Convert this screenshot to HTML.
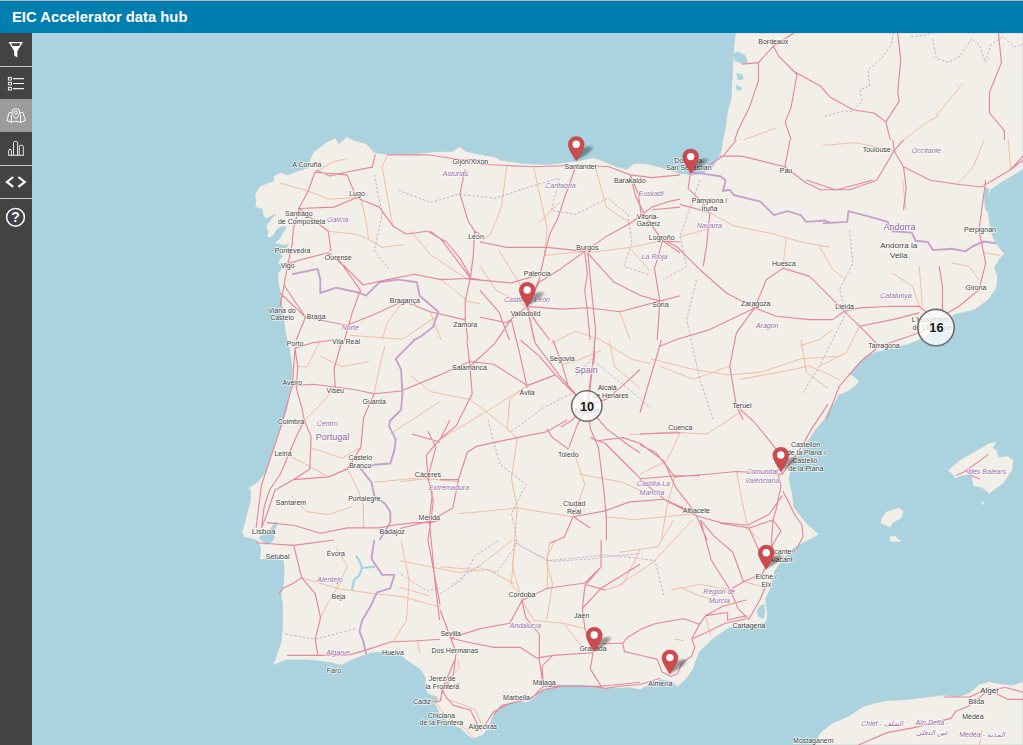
<!DOCTYPE html>
<html><head><meta charset="utf-8">
<style>
html,body{margin:0;padding:0;width:1023px;height:745px;overflow:hidden;background:#aad3df;font-family:"Liberation Sans",sans-serif;}
#hdr{position:absolute;left:0;top:0;width:1023px;height:33px;background:#017eb0;border-top:1px solid #abbfcb;box-shadow:inset 0 1px 0 #0a6c9c;box-sizing:border-box;}
#hdr span{position:absolute;left:12px;top:7.5px;color:#fff;font-weight:bold;font-size:14.8px;line-height:17px;}
#side{position:absolute;left:0;top:33px;width:32px;height:712px;background:#3c3b3b;}
.btn{position:absolute;left:0;width:32px;height:33px;}
.sep{position:absolute;left:0;width:32px;height:1px;background:#bdbdbd;}
#map{position:absolute;left:0;top:0;}
#labels text{font-family:"Liberation Sans",sans-serif;text-anchor:middle;paint-order:stroke;stroke:rgba(255,255,255,0.75);stroke-width:1.6px;stroke-linejoin:round;}
#labels .c{font-size:7px;fill:#3d3d3d;}
#labels .c8{font-size:8px;fill:#3f3f3f;}
#labels .r{font-size:7px;fill:#9a6aa5;font-style:italic;}
#labels .n{font-size:9px;fill:#8f5c9f;}
</style></head><body>
<svg id="map" width="1023" height="745" viewBox="0 0 1023 745">
<defs><filter id="blur" x="-50%" y="-50%" width="200%" height="200%"><feGaussianBlur stdDeviation="2.3"/></filter>
<symbol id="pin" viewBox="0 0 16.5 24.5" overflow="visible"><path d="M8.25,0.3 C3.8,0.3 0.3,3.9 0.3,8.2 C0.3,13.5 8.25,24.4 8.25,24.4 C8.25,24.4 16.2,13.5 16.2,8.2 C16.2,3.9 12.7,0.3 8.25,0.3 Z" fill="#cc4b4f" stroke="#b23e42" stroke-width="0.5"/><circle cx="8.2" cy="8" r="3.7" fill="#fff"/></symbol></defs>
<rect x="0" y="0" width="1023" height="745" fill="#aad3df"/>
<!--LAND-->
<g fill="#f2efe9" stroke="#b5cfd6" stroke-width="0.7" stroke-linejoin="round">
<polygon points="735.3,33.0 1023.0,33.0 1023.0,169.6 1011.4,176.5 1000.0,183.3 990.9,190.1 987.4,201.5 988.6,215.2 990.9,231.2 995.4,242.6 1004.5,254.0 1000.0,258.5 994.3,267.6 997.7,276.8 996.6,288.1 988.6,299.5 974.9,309.8 955.0,314.5 941.0,324.6 924.0,338.0 907.6,344.7 883.0,350.7 874.4,352.9 865.8,356.1 860.5,361.5 853.0,370.0 849.7,374.4 853.0,375.4 859.4,381.3 855.1,386.2 850.8,389.4 843.3,393.7 839.0,394.8 835.8,401.2 829.3,409.8 824.0,420.0 814.0,432.0 806.0,444.5 798.4,456.6 791.0,467.0 789.3,479.7 792.5,494.2 794.0,507.5 807.4,524.3 819.1,534.4 807.4,541.0 794.0,547.8 784.0,557.9 774.9,570.9 772.2,583.0 769.5,591.0 765.5,599.1 766.5,606.0 767.5,614.0 766.8,620.5 764.2,623.2 753.4,624.6 740.0,626.0 729.9,627.5 713.5,638.4 699.5,651.6 693.2,668.8 687.0,678.2 677.6,686.8 671.3,681.3 661.9,679.8 652.6,682.9 640.0,689.9 629.1,687.6 605.6,689.1 582.1,685.0 554.7,685.0 543.9,689.7 534.5,697.5 528.2,702.2 512.6,702.2 500.1,706.9 493.8,714.7 487.6,728.8 482.9,735.1 473.5,739.0 468.8,736.6 461.0,728.8 453.2,725.7 445.4,719.4 439.5,713.6 437.5,708.9 435.5,705.6 432.8,702.9 432.1,700.9 434.2,702.2 438.2,701.5 436.8,696.8 431.5,695.5 427.4,693.5 424.8,686.8 425.4,678.0 420.7,670.0 415.6,666.3 406.3,660.0 401.5,655.8 387.8,651.7 371.4,653.0 355.0,658.5 341.3,665.4 330.3,662.6 308.4,659.9 286.5,659.9 272.8,665.4 275.6,658.5 281.0,642.1 282.4,628.4 282.4,603.8 280.9,594.0 283.5,583.9 284.1,572.4 283.5,560.9 278.4,558.4 268.2,559.0 259.2,559.6 260.5,553.3 260.5,546.9 257.3,540.5 251.6,538.6 243.9,537.3 242.0,531.6 243.9,525.2 246.5,515.0 250.5,500.0 250.5,489.9 248.0,488.3 250.5,486.7 257.7,481.9 264.2,473.8 267.4,465.8 272.2,452.1 275.4,440.0 280.0,430.0 286.8,408.9 290.9,387.4 292.2,368.6 289.5,349.8 285.5,333.7 281.5,301.5 278.8,285.0 277.8,280.0 277.8,273.3 281.4,268.5 286.2,266.1 288.6,261.2 281.4,264.9 277.8,263.6 280.2,258.8 282.6,256.4 279.0,252.8 280.2,248.0 286.2,248.0 288.6,244.3 283.8,245.5 276.6,243.7 272.9,241.9 275.4,241.9 280.2,238.3 281.4,234.7 285.0,229.8 286.2,226.2 280.2,227.4 276.6,229.8 274.1,234.7 269.3,238.3 266.9,235.9 268.1,231.0 265.7,226.2 269.3,221.4 275.4,214.1 271.7,216.0 265.7,219.0 263.3,215.4 262.1,209.3 254.8,206.9 256.0,200.9 254.8,194.8 259.4,186.4 264.1,184.5 273.5,180.8 273.5,176.1 281.0,172.3 287.6,175.1 294.2,172.3 302.6,169.5 308.3,167.6 310.2,159.1 313.5,152.0 319.6,147.6 327.4,141.7 335.2,137.8 339.1,143.7 346.9,136.8 352.8,139.8 358.7,141.7 366.5,143.7 374.3,152.5 388.0,154.4 417.3,153.5 436.9,151.5 452.5,151.5 459.3,146.6 466.2,151.5 485.7,155.4 496.0,157.2 500.0,160.0 523.5,163.5 547.0,164.6 565.7,162.3 577.4,161.1 593.8,157.6 603.2,161.1 617.3,167.0 626.7,169.3 633.7,163.5 645.5,163.5 659.5,167.0 678.3,172.8 692.4,175.2 704.1,172.8 713.5,165.8 720.5,154.1 722.9,140.0 725.1,129.3 728.0,108.8 731.0,100.0 732.0,80.3 733.7,50.0"/>
<polygon points="947.5,470.8 959.2,460.4 975.4,451.1 989.3,443.0 997.5,441.3 992.8,447.6 997.5,451.1 998.6,456.9 1007.9,455.7 1013.7,460.4 1012.6,469.7 1003.3,483.6 989.3,494.0 982.4,488.2 973.1,486.0 970.8,474.3 959.2,476.6 955.7,479.0 952.2,474.3"/>
<polygon points="881.4,518.4 886.0,511.5 898.8,507.3 903.9,511.5 901.1,518.4 893.0,523.0 890.6,527.7 884.8,525.4 880.2,523.0"/>
<polygon points="889.5,536.0 896.0,535.5 898.0,539.0 902.3,540.0 900.0,542.1 889.5,542.0"/>
<polygon points="813.3,745.0 820.4,732.6 832.3,723.1 848.9,716.0 863.1,706.5 875.0,703.0 886.9,700.6 908.3,699.4 927.3,697.0 943.9,695.1 958.1,697.0 970.0,692.3 979.5,684.0 989.0,681.6 1000.9,684.0 1012.8,685.1 1023.0,681.6 1023.0,745.0"/>
<polygon points="981.0,502.0 984.0,501.5 984.5,504.5 981.5,505.0"/>
</g>
<!--/LAND-->
<!--BORDERS-->
<!--ROADS-->
<path d="M733.3,53.7 L737.8,51.4 L745.2,55.2 L748.1,62.6 L742.2,64.1 L734.8,61.1 ZM736.3,73.0 L742.2,74.5 L743.7,78.9 L737.8,80.4 ZM736.3,84.8 L742.2,87.8 L740.7,90.8 L736.3,89.9 ZM761.0,605.0 L764.5,604.0 L765.0,612.0 L764.0,619.0 L758.5,617.0 L757.0,610.0 ZM985.5,187.0 L989.0,189.0 L988.5,203.0 L987.5,213.0 L985.0,209.0 L984.0,196.0 ZM258.0,538.0 L264.0,534.0 L269.0,531.0 L273.0,525.0 L277.0,521.0 L276.5,527.0 L273.0,533.0 L275.0,537.0 L272.0,542.0 L266.0,545.0 L262.0,541.0 Z" fill="#aad3df"/>
<path d="M356.4,556.1 L360.0,562.0 L362.0,568.0 L359.3,575.4M362.0,568.0 L374.6,566.6M359.3,575.4 L354.0,580.0 L352.0,590.0" fill="none" stroke="#aad3df" stroke-width="2.2" stroke-linejoin="round" stroke-linecap="round"/>
<path d="M360.5,197.7 L365.9,220.5 L368.6,239.3 L382.0,247.4 L403.5,244.7M280.0,183.0 L308.2,191.0 L328.3,199.1 L356.5,197.7M314.9,172.2 L333.7,161.5 L347.1,158.8M392.8,225.9 L382.0,166.8 L387.4,154.8M328.3,231.3 L355.2,234.0 L368.6,239.3M403.5,301.1 L387.4,322.6 L382.0,340.0M430.3,311.8 L441.1,340.0M441.1,279.6 L454.5,290.3 L467.9,301.1 L480.0,303.8M506.8,165.5 L501.5,207.1 L490.7,234.0 L480.0,242.0M533.7,166.8 L547.1,228.6 L544.4,255.4M595.4,166.8 L606.2,207.1 L630.3,223.2M480.0,266.2 L496.1,290.3 L527.0,306.4M587.4,252.8 L630.3,247.4 L662.6,240.7M527.0,306.4 L533.7,340.0M619.6,311.8 L630.3,340.0M544.4,255.4 L584.7,251.4M709.5,212.5 L733.7,225.9 L774.0,234.0 L800.8,242.0 L830.3,247.4M680.0,236.6 L709.5,228.6M984.1,252.8 L1000.2,255.4M823.0,145.4 L855.2,142.7 L894.1,150.7M957.2,184.3 L973.3,166.8 L984.1,140.0M1008.2,140.0 L1010.9,169.5M936.2,115.9 L962.9,83.4M903.6,139.9 L927.3,121.9 L939.2,115.9M743.7,139.9 L776.3,127.8M304.4,420.5 L320.5,404.4 L335.3,387.0M320.5,340.0 L307.1,366.8 L297.7,366.8M374.2,393.7 L379.6,366.8 L385.0,345.4M288.3,455.4 L304.4,463.5 L328.6,476.9M360.8,447.4 L342.0,458.1 L325.9,452.8 L309.8,447.4M347.4,468.9 L358.1,490.3 L363.5,506.4 L363.5,527.9M374.2,482.3 L401.1,479.6 L427.9,476.9M390.3,434.0 L440.0,401.7M291.0,495.7 L307.1,511.8 L328.6,514.5 L352.8,506.4M320.5,356.1 L342.0,366.8 L368.9,361.5M527.2,385.6 L509.8,399.1 L507.1,428.6 L517.9,439.3M440.0,439.3 L493.7,407.1 L527.2,385.6M609.1,340.0 L614.5,366.8 L640.0,388.3M579.6,474.2 L622.6,482.3 L640.0,490.3M601.1,350.7 L574.2,361.5 L563.5,364.2M650.7,358.8 L693.7,369.5 L728.6,374.9 L760.8,372.2 L801.1,358.8 L840.0,356.1M680.3,432.6 L707.1,434.0 L742.0,411.1M680.3,432.6 L666.8,460.8 L640.0,474.2M742.0,525.2 L760.8,540.0M674.9,476.9 L666.8,506.4 L661.5,540.0M736.6,471.5 L742.0,501.1 L747.4,525.2M801.1,340.0 L806.4,372.2 L827.9,388.3M301.7,577.6 L336.6,588.3 L374.2,593.7 L401.1,596.4 L440.0,607.1M336.6,588.3 L347.4,566.8 L336.6,548.1M401.1,540.0 L409.1,580.3 L406.4,620.5 L393.0,642.0M336.6,588.3 L325.9,607.1 L320.5,617.9M417.2,640.7 L419.9,652.8M440.0,566.8 L474.9,569.5 L512.5,540.0M521.9,600.4 L512.5,566.8 L515.2,540.0M547.4,588.3 L547.4,556.1 L555.4,540.0M445.4,698.4 L474.9,709.1 L483.0,727.9M563.5,623.2 L585.0,628.6M521.9,600.4 L534.0,620.5 L563.5,623.2 L582.3,647.4M620.0,584.4 L652.2,563.0 L692.5,520.0M620.0,552.2 L657.6,546.8 L673.7,520.0M671.0,589.8 L700.5,584.4 L730.1,589.8M716.6,600.5 L697.9,595.2 L679.1,587.1M743.5,581.7 L765.0,587.1 L770.3,581.7M981.9,730.3 L979.5,745.0M431.3,696.0 L446.9,717.9 L465.7,728.8 L473.5,738.2M457.9,660.0 L459.4,667.8 L453.2,674.1M674.5,639.1 L683.8,640.7M705.7,615.6 L710.4,636.0M410.4,230.5 L430.5,254.7 L466.8,278.9M350.0,335.3 L402.4,339.3 L438.6,315.1M499.0,250.7 L519.2,282.9 L527.2,307.1M539.3,222.5 L559.4,202.4M631.9,250.7 L650.0,270.8M551.4,343.3 L575.5,331.2 L599.7,339.3 L631.9,359.4 L650.0,363.5M410.4,375.5 L430.5,391.6 L470.8,399.7 L511.1,431.9M400.0,481.6 L426.4,478.7 L458.7,481.6M458.7,513.8 L517.3,508.0 L573.0,516.8M517.3,508.0 L511.4,478.7 L517.3,437.6M517.3,508.0 L514.4,543.2 L511.4,584.2 L523.2,598.9M400.0,560.8 L429.3,566.6 L458.7,572.5 L488.0,569.6 L514.4,584.2M549.6,543.2 L546.6,560.8 L552.5,584.2 L546.6,620.0M573.0,449.3 L584.8,484.5 L573.0,516.8M605.3,516.8 L634.6,519.7 L693.3,513.8M640.5,549.0 L622.9,584.2 L605.3,590.1M400.0,587.2 L429.3,596.0M628.7,434.7 L678.6,431.7M786.3,236.5 L783.0,268.1M739.8,379.4 L776.3,372.8 L809.6,366.1 L839.5,379.4M799.6,346.2 L819.5,339.5 L832.8,329.6M859.4,326.2 L846.1,352.8 L819.5,366.1M892.6,273.1 L912.6,286.3 L919.2,306.3M919.2,266.4 L922.5,306.3M819.5,246.5 L832.8,269.7 L846.1,279.7M952.5,263.1 L969.1,266.4 L979.0,279.7M660.0,366.1 L693.2,379.4 L729.8,366.1M902.6,180.0 L905.9,209.9" fill="none" stroke="#f4bda0" stroke-width="1" stroke-linejoin="round"/>
<path d="M285.6,634.0 L315.2,639.3 L355.4,628.6M401.1,574.9 L427.9,591.0 L440.0,588.3M440.0,593.7 L461.5,580.3 L474.9,556.1 L499.1,540.0M515.2,542.7 L528.6,550.7 L552.8,561.5 L590.3,558.8 L614.5,556.1 L640.0,553.4M398.3,190.3 L430.5,202.4 L458.7,194.3 L495.0,198.3 L531.2,186.2 L559.4,178.2M559.4,178.2 L551.4,210.4 L575.5,214.4 L607.8,198.3 L627.9,214.4M374.2,174.2 L382.2,214.4 L374.2,250.7 L390.3,270.8M627.9,214.4 L631.9,242.6 L623.9,266.8 L650.0,274.8M575.5,375.5 L591.6,359.4 L611.8,375.5 L631.9,391.6 L650.0,407.8M511.1,431.9 L543.3,407.8 L575.5,391.6M488.0,420.0 L499.7,464.0 L526.1,484.5 L511.4,513.8 L517.3,543.2 L546.6,560.8 L576.0,557.8 L605.3,554.9 L634.6,557.8 L655.1,560.8 L663.9,596.0M452.8,584.2 L476.2,566.6 L496.8,572.5 L517.3,543.2M699.9,180.0 L679.9,236.5 L686.6,266.4 L663.3,279.7M849.4,229.9 L852.8,263.1 L839.5,289.7 L846.1,312.9 L832.8,339.5 L819.5,366.1 L802.9,392.7M696.6,279.7 L686.6,319.6 L699.9,379.4 L713.2,419.9M893.4,33.0 L891.4,44.7 L881.7,58.4 L868.0,70.1 L869.9,85.8 L860.1,89.7 L862.1,101.4 L852.3,111.2 L842.6,111.2 L823.0,117.1M911.0,36.9 L924.7,35.0 L932.5,33.0M932.5,38.9 L936.4,58.4 L948.1,62.3 L959.9,56.5 L971.6,38.9 L979.4,44.7 L985.3,62.3 L991.1,44.7 L1002.9,36.9 L1014.6,46.7 L1023.0,44.7" fill="none" stroke="#c9a6cf" stroke-width="0.9" stroke-dasharray="2.5,1.8"/>
<path d="M292.1,274.2 L317.6,268.9 L320.3,279.6 L320.3,293.0 L336.4,287.7 L360.5,293.0 L365.9,295.7 L379.3,282.3 L398.1,279.6 L416.9,282.3 L419.6,295.7 L438.4,311.8 L433.0,327.1 L420.9,336.5 L412.9,340.3M690.7,172.8 L702.8,173.6 L720.3,176.2 L725.6,180.3 L723.0,191.0 L729.7,189.7 L733.7,195.0 L760.5,201.7 L765.9,207.1 L774.0,215.2 L787.4,211.1 L800.8,215.2 L806.2,221.9 L825.0,220.5 L830.3,223.2M823.0,223.2 L847.2,221.9 L848.5,211.1 L874.0,217.9 L887.4,221.9 L892.8,231.3 L911.6,232.6 L915.6,240.7 L927.7,242.0 L933.1,250.1 L951.9,248.7 L965.3,251.4 L973.3,246.0 L984.1,241.5 L996.2,243.4M414.5,340.0 L401.1,353.4 L395.7,358.8 L401.1,369.5 L402.4,393.7 L401.1,409.8 L390.3,420.5 L389.0,425.9 L395.7,439.3 L394.4,450.1 L390.3,463.5 L374.2,464.8 L360.8,468.9 L371.5,482.3 L374.2,495.7 L385.0,503.8 L390.3,511.8 L390.3,522.6 L379.6,540.0M374.2,540.0 L371.5,558.8 L382.3,574.9 L394.4,574.9 L390.3,588.3 L376.9,592.3 L371.5,604.4 L362.1,620.5 L359.5,631.3 L363.5,642.0 L366.2,654.1" fill="none" stroke="#c7a0cf" stroke-width="1.9" stroke-linejoin="round"/>
<path d="M314.9,172.2 L308.2,191.0 L298.8,208.5 L293.4,228.6 L292.1,244.7 L288.1,263.5 L284.0,285.0 L280.0,306.4M314.9,172.2 L347.1,174.9 L356.5,197.7 L379.3,207.1 L392.8,225.9 L406.2,234.0 L427.7,231.3 L446.4,242.0 L459.9,258.1 L470.6,276.9M387.4,154.8 L427.7,154.8 L454.5,158.8 L480.0,160.1M465.2,169.5 L459.9,193.7 L467.9,220.5 L474.6,231.3 L473.3,255.4 L470.6,276.9 L465.2,301.1 L465.2,319.9 L467.9,340.0M288.1,263.5 L306.8,258.1 L328.3,252.8 L344.4,266.2 L363.2,285.0 L387.4,279.6 L414.2,274.2 L441.1,279.6 L470.6,278.3M298.8,208.5 L328.3,231.3 L331.0,251.4M305.5,317.2 L347.1,325.2 L374.0,314.5 L403.5,301.1 L430.3,311.8 L465.2,319.9M337.7,258.1 L360.5,290.3 L352.5,311.8 L344.4,340.0M356.5,197.7 L333.7,207.1 L298.8,208.5M480.0,279.6 L470.6,278.3 L441.1,239.3 L430.3,231.3M474.6,231.3 L480.0,234.0M280.0,293.0 L305.5,317.2 L296.1,340.0M284.0,285.0 L305.5,317.2M480.0,164.2 L506.8,165.5 L533.7,166.8 L568.6,165.5 L587.4,165.5 L608.9,166.8 L630.3,174.9 L651.8,177.6 L680.0,174.9M480.0,242.0 L506.8,247.4 L547.1,247.4 L584.7,251.4M584.7,251.4 L606.2,236.6 L630.3,223.2 L641.1,215.2 L651.8,207.1 L667.9,201.7 L680.0,199.1M641.1,215.2 L638.4,193.7 L630.3,174.9M630.3,174.9 L635.7,196.4 L646.4,217.9 L662.6,240.7 L680.0,252.8M576.6,164.2 L565.9,193.7 L557.9,217.9 L549.8,234.0 L544.4,255.4 L539.1,279.6 L527.0,306.4M584.7,251.4 L560.5,268.9 L539.1,282.3 L527.0,306.4M584.7,251.4 L587.4,274.2 L584.7,290.3 L587.4,311.8 L590.1,340.0M527.0,306.4 L536.4,322.6 L549.8,340.0M527.0,306.4 L506.8,322.6 L480.0,317.2M527.0,306.4 L560.5,309.1 L587.4,307.8 L619.6,311.8 L659.9,301.1 L680.0,295.7M659.9,301.1 L654.5,268.9 L662.6,240.7M587.4,252.8 L614.2,282.3 L641.1,295.7 L659.9,301.1M651.8,209.8 L680.0,207.1M480.0,290.3 L498.8,311.8 L509.5,340.0M662.6,240.7 L680.0,242.0M659.9,301.1 L657.2,340.0M690.7,172.2 L706.8,166.8 L723.0,156.1 L736.4,140.0M690.7,172.2 L688.1,188.3 L701.5,201.7 L709.5,212.5M680.0,204.4 L709.5,212.5M720.3,156.1 L741.7,156.1 L784.7,166.8 L806.2,183.0 L822.3,190.5M784.7,166.8 L790.1,140.0M894.1,150.7 L903.5,166.8 L930.4,180.3 L957.2,184.3 L981.4,187.0 L1010.9,169.5 L1023.0,156.1M894.1,150.7 L876.7,180.3 L849.8,189.7 L823.0,189.7M894.1,150.7 L892.8,140.0M894.1,150.7 L903.5,140.0M903.5,166.8 L906.2,188.3 L903.5,209.8M1010.9,169.5 L1023.0,160.1M773.3,46.3 L779.2,56.7 L794.1,71.5 L820.7,86.3 L829.6,96.7 L853.3,110.0 L874.0,113.0 L885.9,121.9 L890.3,139.9M773.3,46.3 L758.5,62.6 L758.5,80.4 L749.6,107.1 L737.8,130.7 L734.8,139.9M773.3,46.3 L794.1,33.0M794.1,71.5 L797.0,74.5 L791.1,107.1 L785.2,121.9 L791.1,139.9M897.7,33.0 L900.7,59.7 L897.7,92.2 L899.2,101.1 L885.9,121.9M998.4,33.0 L1001.4,62.6 L989.5,92.2 L989.5,113.0 L1004.4,130.7 L1004.4,139.9M742.2,64.1 L758.5,62.6M295.0,348.1 L297.7,366.8 L296.4,388.3 L301.7,407.1 L304.4,420.5 L296.4,436.6 L288.3,455.4 L280.3,474.2 L269.5,490.3 L264.2,506.4 L261.5,527.9M295.0,348.1 L292.3,385.6 L280.3,428.6 L272.2,452.8 L261.5,485.0 L258.8,506.4 L256.1,527.9M295.0,348.1 L312.5,342.7 L334.0,340.0M292.3,385.6 L312.5,384.3 L335.3,387.0 L355.4,389.7 L374.2,393.7 L401.1,391.0 L440.0,374.9M335.3,387.0 L334.0,369.5 L342.0,340.0M374.2,393.7 L363.5,417.9 L360.8,447.4 L347.4,468.9 L328.6,476.9 L293.7,479.6 L274.9,490.3 L266.8,514.5 L261.5,527.9M393.0,525.2 L414.5,522.6 L430.6,522.6 L440.0,519.9M266.8,522.6 L293.7,525.2 L320.5,533.3 L347.4,527.9 L379.6,527.9 L393.0,525.2M427.9,431.3 L436.0,447.4 L427.9,476.9 L433.3,501.1 L430.6,522.6 L427.9,540.0M411.8,434.0 L440.0,442.0M304.4,420.5 L311.1,436.6 L309.8,468.9 L293.7,479.6M587.1,405.8 L568.9,388.3 L555.4,374.9 L539.3,356.1 L520.5,340.0M555.4,374.9 L527.2,385.6 L493.7,364.2 L469.5,361.5M469.5,361.5 L466.8,340.0M469.5,361.5 L440.0,374.9M469.5,361.5 L472.2,393.7 L456.1,425.9 L440.0,439.3M568.9,388.3 L562.1,364.2 L552.8,340.0M587.1,405.8 L590.3,380.3 L594.4,356.1 L594.4,340.0M587.1,405.8 L606.4,399.1 L622.6,385.6 L640.0,369.5M587.1,405.8 L606.4,428.6 L627.9,444.7 L640.0,452.8M587.1,405.8 L590.3,428.6 L598.4,447.4 L603.8,490.3 L606.4,517.2 L606.4,540.0M587.1,405.8 L576.9,425.9 L568.9,447.4M587.1,405.8 L571.5,420.5 L560.8,427.2M440.0,479.6 L458.8,479.6M574.2,517.2 L590.3,527.9M734.0,401.7 L742.0,411.1 L752.8,420.5 L766.2,436.6 L776.9,450.1 L782.3,474.2M827.9,404.4 L811.8,428.6 L801.1,447.4 L790.3,463.5 L782.3,474.2M640.0,444.7 L656.1,452.8 L674.9,476.9 L707.1,474.2 L736.6,471.5 L782.3,474.2M696.4,515.8 L720.5,522.6 L747.4,525.2 L768.9,514.5 L782.3,495.7M640.0,479.6 L666.8,501.1 L696.4,515.8 L707.1,540.0M680.3,432.6 L640.0,434.0M640.0,412.5 L661.5,340.0M293.7,545.4 L301.7,577.6 L315.2,593.7 L320.5,617.9 L315.2,639.3 L317.9,655.4M287.0,655.4 L317.9,655.4 L347.4,655.4 L366.2,650.1 L390.3,642.0 L417.2,640.7 L440.0,639.3M427.9,540.0 L440.0,604.4M256.1,542.7 L293.7,545.4 L334.0,540.0M278.9,593.7 L283.0,588.3 L293.7,583.0 L301.7,577.6M450.7,638.0 L480.3,628.6 L509.8,623.2 L521.9,600.4 L547.4,588.3 L585.0,583.0 L601.1,566.8 L601.1,540.0M450.7,638.0 L466.8,642.0 L493.7,647.4 L520.5,647.4 L536.6,658.1 L552.8,655.4 L593.0,652.8M521.9,600.4 L525.9,617.9 L539.3,634.0 L539.3,660.8 L543.4,686.3M593.0,652.8 L585.0,628.6 L582.3,608.5 L585.0,585.6 L601.1,566.8M593.0,652.8 L590.3,668.9 L601.1,686.3M483.0,727.9 L493.7,711.8 L509.8,703.8 L531.3,698.4 L543.4,686.3 L574.2,686.3 L601.1,686.3 L640.0,682.3M450.7,638.0 L456.1,652.8 L453.4,674.2 L442.7,690.3 L440.0,701.1M440.0,609.8 L450.7,638.0M543.4,686.3 L542.0,666.2 L552.8,655.4M582.3,608.5 L601.1,588.3 L640.0,564.2M730.1,589.8 L743.5,581.7 L762.3,573.7 L770.3,558.9M730.1,589.8 L738.1,608.6 L748.9,619.3M770.3,558.9 L773.0,520.0M743.5,581.7 L732.8,552.2 L714.0,536.1 L700.5,520.0M730.1,589.8 L711.3,560.3 L700.5,520.0M748.9,619.3 L759.6,600.5 L767.7,581.7M858.4,745.0 L886.9,732.6 L913.0,727.9 L951.0,718.4 L955.8,711.3 L967.6,706.5 L977.1,699.4 L989.0,689.9 L1005.7,687.5 L1023.0,692.3M943.9,697.0 L970.0,697.0 L989.0,687.5M989.0,689.9 L1008.0,699.4 L1023.0,699.4M442.2,689.7 L440.7,700.7 L436.0,702.2 L432.8,701.4M442.2,689.7 L445.4,696.0 L453.2,705.4 L470.4,710.0 L476.6,722.6 L481.3,730.4M442.2,689.7 L454.7,660.0M493.8,714.7 L501.7,705.4 L515.7,702.2 L531.4,697.5 L543.9,689.7 L560.0,686.6M442.2,689.7 L459.4,683.5M316.0,170.0 L330.0,176.0 L346.9,172.0 L372.3,167.1 L375.3,154.4M955.7,475.5 L963.8,472.0 L975.4,463.9 L988.2,454.6M966.1,470.8 L972.0,476.0 L980.0,479.0M778.0,474.0 L781.0,486.0 L776.0,510.0 L773.0,520.0 L781.0,531.0 L773.0,544.0 L767.0,567.0M782.8,491.0 L795.0,515.0 L802.0,525.0 L803.0,537.0 L797.0,548.0 L790.0,553.0M720.0,523.2 L749.0,528.0 L755.4,542.5 L766.7,566.6M749.0,528.0 L773.0,520.0M602.5,643.8 L622.8,643.0 L627.5,637.5 L641.6,628.9 L655.7,623.5 L683.8,618.8 L699.5,624.2 L705.7,615.6 L722.9,606.3 L746.4,600.0M622.8,643.0 L624.4,651.6 L641.6,655.5 L657.3,659.4 L661.9,671.9 L671.3,676.6 L677.6,673.5 L682.3,662.6 L691.7,656.3 L694.8,646.9 L691.7,639.1 L699.5,624.2M691.7,639.1 L708.9,631.3 L724.5,623.5 L746.4,618.8M705.7,615.6 L727.6,612.5 L727.6,620.3 L746.4,615.6M590.0,686.0 L605.6,688.4 L621.3,686.0 L640.0,684.5 L660.4,678.2M527.2,307.1 L535.3,343.3 L559.4,375.5 L587.6,407.8M468.8,367.5 L495.0,343.3 L511.1,319.2M587.6,250.7 L591.6,291.0 L595.7,331.2 L591.6,375.5 L587.6,407.8M511.1,319.2 L519.2,351.4 L527.2,387.6M466.8,278.9 L511.1,282.9 L539.3,274.8M429.3,521.2 L432.3,552.0 L435.2,584.2 L439.6,620.0M429.3,521.2 L432.3,493.3 L427.9,478.7 L426.4,455.2 L441.1,437.6 L449.9,420.0M400.0,528.5 L429.3,521.2 L452.8,508.0 L458.7,478.7 L467.4,452.3 L476.2,446.4 L517.3,437.6 L546.6,431.7 L567.2,420.0M568.6,449.3 L552.5,437.6 L546.6,428.8M573.0,516.8 L605.3,510.9 L628.7,502.1 L663.9,499.2 L696.2,513.8M584.8,584.2 L605.3,590.1M696.2,513.8 L675.7,487.4 L663.9,461.1 L640.5,443.5 L622.9,437.6 L599.4,440.5M590.6,437.6 L605.3,443.5 L625.8,464.0 L640.5,478.7 L675.7,475.7 L700.0,475.7M573.0,516.8 L564.2,537.3 L549.6,543.2M754.7,307.9 L776.3,316.3 L809.6,319.6 L832.8,319.6 L844.4,311.3 L859.4,307.9 L892.6,306.3 L919.2,306.3 L935.8,319.6M844.4,311.3 L859.4,326.2 L879.3,346.2M879.3,346.2 L909.3,336.2 L935.8,326.2M879.3,346.2 L859.4,362.8 L839.5,386.0 L826.2,419.9M935.8,319.6 L959.1,306.3 L979.0,289.7 L985.7,263.1 L979.0,229.9 L985.7,180.0M783.0,268.1 L809.6,276.4 L832.8,299.6 L844.4,311.3M754.7,307.9 L766.3,279.7 L783.0,268.1M754.7,307.9 L736.4,332.9 L729.8,366.1 L736.4,406.0 L743.1,419.9M754.7,307.9 L709.9,329.6 L676.6,339.5 L660.0,346.2M754.7,307.9 L726.5,293.0 L699.9,269.7 L676.6,246.5 L663.3,239.8M709.9,213.2 L706.5,246.5 L703.2,266.4M806.2,180.0 L836.1,190.0 L872.7,180.0M859.4,326.2 L892.6,319.6 L919.2,312.9M939.2,266.4 L942.5,286.3 L942.5,312.9" fill="none" stroke="#e5879a" stroke-width="1.15" stroke-linejoin="round"/>
<!--/ROADS-->
<!--LABELS-->
<g id="labels">
<text class="c" x="773.3" y="43.7">Bordeaux</text>
<text class="c" x="876.7" y="152.3">Toulouse</text>
<text class="r" x="926.4" y="153.1">Occitanie</text>
<text class="c" x="786.0" y="172.7">Pau</text>
<text class="c" x="306.8" y="166.6">A Coruña</text>
<text class="c" x="470.3" y="163.9">Gijón/Xixón</text>
<text class="r" x="455.5" y="176.0">Asturias</text>
<text class="c" x="357.0" y="196.1">Lugo</text>
<text class="c" x="298.8" y="216.2">Santiago</text>
<text class="c" x="301.5" y="224.3">de Compostela</text>
<text class="r" x="337.7" y="221.9">Galicia</text>
<text class="c" x="292.6" y="252.7">Pontevedra</text>
<text class="c" x="287.6" y="268.4">Vigo</text>
<text class="c" x="338.3" y="259.7">Ourense</text>
<text class="c" x="404.8" y="303.4">Bragança</text>
<text class="c" x="465.2" y="327.1">Zamora</text>
<text class="c" x="316.2" y="319.0">Braga</text>
<text class="c" x="282.0" y="312.6">Viana do</text>
<text class="c" x="282.0" y="320.4">Castelo</text>
<text class="r" x="350.3" y="329.5">Norte</text>
<text class="c" x="346.0" y="343.7">Vila Real</text>
<text class="c" x="295.0" y="345.6">Porto</text>
<text class="c" x="476.0" y="239.0">León</text>
<text class="c" x="469.5" y="369.8">Salamanca</text>
<text class="c" x="580.7" y="169.2">Santander</text>
<text class="c" x="629.8" y="182.7">Barakaldo</text>
<text class="r" x="560.5" y="187.5">Cantabria</text>
<text class="r" x="651.0" y="195.6">Euskadi</text>
<text class="c" x="647.8" y="218.9">Vitoria-</text>
<text class="c" x="648.3" y="226.4">Gasteiz</text>
<text class="c" x="661.7" y="239.8">Logroño</text>
<text class="r" x="654.5" y="259.2">La Rioja</text>
<text class="c" x="587.4" y="249.8">Burgos</text>
<text class="c" x="537.2" y="276.1">Palencia</text>
<text class="r" x="527.0" y="301.6">Castilla y León</text>
<text class="c" x="525.6" y="316.1">Valladolid</text>
<text class="c" x="660.4" y="306.7">Soria</text>
<text class="c" x="689.4" y="162.5">Donostia-</text>
<text class="c" x="688.8" y="170.4">San Sebastián</text>
<text class="c" x="709.5" y="203.4">Pamplona /</text>
<text class="c" x="709.5" y="210.9">Iruña</text>
<text class="r" x="709.5" y="228.3">Navarra</text>
<text class="c" x="783.9" y="265.9">Huesca</text>
<text class="c" x="755.7" y="305.6">Zaragoza</text>
<text class="c" x="844.6" y="308.8">Lleida</text>
<text class="r" x="767.2" y="327.6">Aragón</text>
<text class="n" x="899.5" y="230.4">Andorra</text>
<text class="c8" x="898.7" y="248.3">Andorra la</text>
<text class="c8" x="898.7" y="258.2">Vella</text>
<text class="c" x="980.0" y="231.5">Perpignan</text>
<text class="c" x="976.0" y="289.5">Girona</text>
<text class="r" x="896.0" y="298.1">Catalunya</text>
<text class="c" x="884.0" y="347.9">Tarragona</text>
<text class="c" x="292.3" y="384.8">Aveiro</text>
<text class="c" x="335.3" y="393.4">Viseu</text>
<text class="c" x="374.2" y="403.6">Guarda</text>
<text class="c" x="291.0" y="423.7">Coimbra</text>
<text class="r" x="327.2" y="426.2">Centro</text>
<text class="n" x="332.6" y="440.4">Portugal</text>
<text class="c" x="283.0" y="455.7">Leiria</text>
<text class="c" x="360.3" y="460.0">Castelo</text>
<text class="c" x="360.3" y="467.8">Branco</text>
<text class="c" x="427.9" y="476.6">Cáceres</text>
<text class="r" x="449.0" y="490.4">Extremadura</text>
<text class="c" x="291.0" y="504.8">Santarém</text>
<text class="c" x="364.3" y="500.8">Portalegre</text>
<text class="c" x="429.3" y="519.6">Mérida</text>
<text class="c8" x="263.6" y="534.2">Lisboa</text>
<text class="c" x="392.2" y="533.8">Badajoz</text>
<text class="c" x="562.1" y="361.2">Segovia</text>
<text class="n" x="586.3" y="373.2">Spain</text>
<text class="c" x="607.2" y="390.2">Alcalá</text>
<text class="c" x="610.5" y="398.0">de Henares</text>
<text class="c" x="527.2" y="394.7">Ávila</text>
<text class="c" x="568.3" y="457.3">Toledo</text>
<text class="c" x="574.2" y="506.2">Ciudad</text>
<text class="c" x="574.2" y="514.2">Real</text>
<text class="r" x="653.4" y="486.0">Castilla-La</text>
<text class="r" x="652.0" y="495.4">Mancha</text>
<text class="c" x="742.0" y="408.2">Teruel</text>
<text class="c" x="680.3" y="429.6">Cuenca</text>
<text class="c" x="805.6" y="447.3">Castellón</text>
<text class="c" x="806.4" y="455.4">de la Plana /</text>
<text class="c" x="804.8" y="463.4">Castelló</text>
<text class="c" x="805.8" y="471.1">de la Plana</text>
<text class="r" x="762.1" y="474.4">Comunitat</text>
<text class="r" x="762.1" y="483.4">Valenciana</text>
<text class="c" x="696.4" y="513.4">Albacete</text>
<text class="c" x="277.6" y="559.0">Setúbal</text>
<text class="c" x="335.8" y="556.4">Évora</text>
<text class="r" x="330.0" y="582.1">Alentejo</text>
<text class="c" x="338.5" y="598.8">Beja</text>
<text class="r" x="338.0" y="654.6">Algarve</text>
<text class="c" x="334.0" y="673.1">Faro</text>
<text class="c" x="393.0" y="655.2">Huelva</text>
<text class="c" x="521.9" y="597.4">Córdoba</text>
<text class="r" x="525.4" y="628.4">Andalucía</text>
<text class="c" x="581.7" y="617.6">Jaén</text>
<text class="c" x="450.7" y="635.6">Sevilla</text>
<text class="c" x="454.8" y="653.3">Dos Hermanas</text>
<text class="c" x="593.0" y="650.6">Granada</text>
<text class="c" x="544.2" y="685.2">Málaga</text>
<text class="c" x="516.5" y="700.3">Marbella</text>
<text class="c" x="482.9" y="728.9">Algeciras</text>
<text class="c" x="442.2" y="681.2">Jerez de</text>
<text class="c" x="442.2" y="688.7">la Frontera</text>
<text class="c" x="421.9" y="704.3">Cádiz</text>
<text class="c" x="441.4" y="717.6">Chiclana</text>
<text class="c" x="441.4" y="725.4">de la Frontera</text>
<text class="c" x="781.0" y="554.1">Alicante /</text>
<text class="c" x="781.0" y="561.7">Alacant</text>
<text class="c" x="766.3" y="578.8">Elche /</text>
<text class="c" x="766.3" y="586.8">Elx</text>
<text class="r" x="719.3" y="594.3">Región de</text>
<text class="r" x="719.3" y="603.4">Murcia</text>
<text class="c" x="748.9" y="627.9">Cartagena</text>
<text class="c" x="660.3" y="686.2">Almería</text>
<text class="c" x="813.3" y="743.4">Mostaganem</text>
<text class="c8" x="989.5" y="693.2">Alger</text>
<text class="c" x="976.4" y="703.7">Blida</text>
<text class="c" x="972.9" y="718.9">Médéa</text>
<text class="r" x="882.0" y="726.0">Chlef - الشلف</text>
<text class="r" x="932.0" y="725.4">Aïn Defla -</text>
<text class="r" x="932.0" y="735.0">عين الدفلى</text>
<text class="r" x="982.0" y="737.4">Médéa - المدية</text>
<text class="r" x="987.0" y="473.9">Illes Balears</text>
<text class="c8" x="587.0" y="412.8">Madrid</text>
<text class="c" x="930.0" y="322.4">L&#x27;Hospitalet</text>
<text class="c" x="932.0" y="330.4">de Llobregat</text>
</g>
<!--/LABELS-->
<g id="markers"><path d="M8.25,0.3 C3.8,0.3 0.3,3.9 0.3,8.2 C0.3,13.5 8.25,24.4 8.25,24.4 C8.25,24.4 16.2,13.5 16.2,8.2 C16.2,3.9 12.7,0.3 8.25,0.3 Z" transform="translate(576.25,160.70000000000002) skewX(-42) scale(0.72,0.6) translate(-8.25,-24.4)" fill="#000" opacity="0.36" filter="url(#blur)"/><path d="M8.25,0.3 C3.8,0.3 0.3,3.9 0.3,8.2 C0.3,13.5 8.25,24.4 8.25,24.4 C8.25,24.4 16.2,13.5 16.2,8.2 C16.2,3.9 12.7,0.3 8.25,0.3 Z" transform="translate(527.25,306.4) skewX(-42) scale(0.72,0.6) translate(-8.25,-24.4)" fill="#000" opacity="0.36" filter="url(#blur)"/><path d="M8.25,0.3 C3.8,0.3 0.3,3.9 0.3,8.2 C0.3,13.5 8.25,24.4 8.25,24.4 C8.25,24.4 16.2,13.5 16.2,8.2 C16.2,3.9 12.7,0.3 8.25,0.3 Z" transform="translate(690.75,173.0) skewX(-42) scale(0.72,0.6) translate(-8.25,-24.4)" fill="#000" opacity="0.36" filter="url(#blur)"/><path d="M8.25,0.3 C3.8,0.3 0.3,3.9 0.3,8.2 C0.3,13.5 8.25,24.4 8.25,24.4 C8.25,24.4 16.2,13.5 16.2,8.2 C16.2,3.9 12.7,0.3 8.25,0.3 Z" transform="translate(780.85,471.4) skewX(-42) scale(0.72,0.6) translate(-8.25,-24.4)" fill="#000" opacity="0.36" filter="url(#blur)"/><path d="M8.25,0.3 C3.8,0.3 0.3,3.9 0.3,8.2 C0.3,13.5 8.25,24.4 8.25,24.4 C8.25,24.4 16.2,13.5 16.2,8.2 C16.2,3.9 12.7,0.3 8.25,0.3 Z" transform="translate(766.25,569.1999999999999) skewX(-42) scale(0.72,0.6) translate(-8.25,-24.4)" fill="#000" opacity="0.36" filter="url(#blur)"/><path d="M8.25,0.3 C3.8,0.3 0.3,3.9 0.3,8.2 C0.3,13.5 8.25,24.4 8.25,24.4 C8.25,24.4 16.2,13.5 16.2,8.2 C16.2,3.9 12.7,0.3 8.25,0.3 Z" transform="translate(594.25,651.4) skewX(-42) scale(0.72,0.6) translate(-8.25,-24.4)" fill="#000" opacity="0.36" filter="url(#blur)"/><path d="M8.25,0.3 C3.8,0.3 0.3,3.9 0.3,8.2 C0.3,13.5 8.25,24.4 8.25,24.4 C8.25,24.4 16.2,13.5 16.2,8.2 C16.2,3.9 12.7,0.3 8.25,0.3 Z" transform="translate(669.95,674.0) skewX(-42) scale(0.72,0.6) translate(-8.25,-24.4)" fill="#000" opacity="0.36" filter="url(#blur)"/><use href="#pin" x="568" y="136.3" width="16.5" height="24.5"/><use href="#pin" x="519" y="282" width="16.5" height="24.5"/><use href="#pin" x="682.5" y="148.6" width="16.5" height="24.5"/><use href="#pin" x="772.6" y="447" width="16.5" height="24.5"/><use href="#pin" x="758" y="544.8" width="16.5" height="24.5"/><use href="#pin" x="586" y="627" width="16.5" height="24.5"/><use href="#pin" x="661.7" y="649.6" width="16.5" height="24.5"/><circle cx="586.8" cy="406" r="15.2" fill="#fff" fill-opacity="0.72" stroke="#6f6f6f" stroke-width="1.6"/>
<text x="587" y="410.8" font-family="Liberation Sans" font-weight="bold" font-size="12.8" fill="#1a1a1a" text-anchor="middle">10</text>
<circle cx="936" cy="327.6" r="18.2" fill="#fff" fill-opacity="0.72" stroke="#6f6f6f" stroke-width="1.6"/>
<text x="936.4" y="332.4" font-family="Liberation Sans" font-weight="bold" font-size="12.8" fill="#1a1a1a" text-anchor="middle">16</text></g>
</svg>
<div id="hdr"><span>EIC Accelerator data hub</span></div>
<div id="side"></div>
<svg style="position:absolute;left:0;top:0" width="32" height="745" viewBox="0 0 32 745">
<rect x="0" y="33" width="32" height="712" fill="#434343"/>
<rect x="0" y="99" width="32" height="33" fill="#9c9c9c"/>
<rect x="0" y="66" width="32" height="1" fill="#c8c8c8"/>
<rect x="0" y="165" width="32" height="1" fill="#c8c8c8"/>
<rect x="0" y="198" width="32" height="1" fill="#c8c8c8"/>
<path fill="#fff" fill-rule="evenodd" d="M8.6,42 L23,42 L17.3,51.2 L17.3,57.6 L14.2,55.6 L14.2,51.2 Z M11,43.2 L20.6,43.2 L19.1,45.9 L12.6,45.9 Z"/>
<g fill="none" stroke="#eee" stroke-width="1">
<rect x="8.4" y="77.4" width="3" height="2.6"/><rect x="8.4" y="82.3" width="3" height="2.6"/><rect x="8.4" y="87.4" width="3" height="2.6"/>
</g>
<g stroke="#eee" stroke-width="1.1"><path d="M13,78.6H24M13,83.5H24M13,88.6H24"/></g>
<g fill="none" stroke="#fff" stroke-width="0.95" stroke-linejoin="round">
<path d="M12.1,112.9 L9.3,112.3 L6.8,120.5 L11.2,122.3 L15.9,121.2 L21,122.3 L25.5,120.5 L22.8,112.3 L19.7,112.9"/>
<path d="M11.4,114.8 V122 M20.5,114.8 V122"/>
<path d="M15.9,118.9 C13.6,116.2 12,114.3 12,112.4 A3.9,3.9 0 0 1 19.8,112.4 C19.8,114.3 18.2,116.2 15.9,118.9 Z"/>
<circle cx="15.9" cy="112.5" r="1.6"/>
</g>
<g fill="none" stroke="#eee" stroke-width="0.95">
<path d="M8.6,155.3 V150.4 Q8.6,149.4 10,149.4 Q11.4,149.4 11.4,150.4 V155.3 M13.5,155.3 V142.4 Q13.5,141.4 15.5,141.4 Q17.6,141.4 17.6,142.4 V155.3 M19.3,155.3 V146.2 Q19.3,145.2 21.2,145.2 Q23.3,145.2 23.3,146.2 V155.3 M8.2,155.3 H23.8"/>
</g>
<g fill="none" stroke="#fff" stroke-width="2.1" stroke-linejoin="miter">
<path d="M13.2,177 L6.9,181.9 L13.2,186.9 M18.4,177 L24.8,181.9 L18.4,186.9"/>
</g>
<circle cx="15.5" cy="217.3" r="8.9" fill="none" stroke="#fff" stroke-width="1.5"/>
<text x="15.6" y="222.3" fill="#fff" font-family="Liberation Sans" font-weight="bold" font-size="14" text-anchor="middle">?</text>
</svg>
</body></html>
